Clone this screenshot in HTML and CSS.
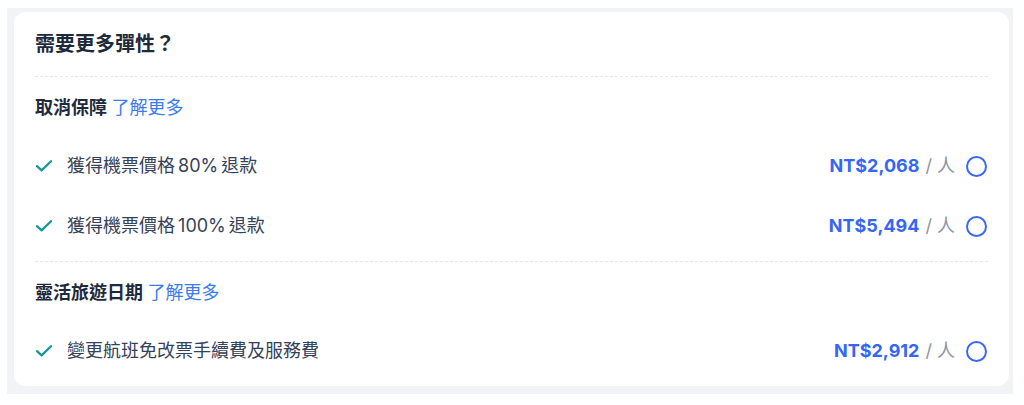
FILE: index.html
```html
<!DOCTYPE html>
<html lang="zh-Hant">
<head>
<meta charset="utf-8">
<link rel="stylesheet" href="styles.css">
</head>
<body>
<div class="frame">
  <div class="card">
    <div class="title">需要更多彈性？</div>
    <div class="section">
      <div class="sec-head">取消保障 <span class="link">了解更多</span></div>
      <div class="row">
        <div class="left">
          <svg class="check" width="16" height="12" viewBox="0 0 16 12"><path d="M1 6.2 L5.6 10.4 L15 1.2" fill="none" stroke="#17969b" stroke-width="2.3" stroke-linecap="round" stroke-linejoin="round"/></svg>
          <span class="label">獲得機票價格 80% 退款</span>
        </div>
        <div class="right">
          <span class="price">NT$2,068</span><span class="per">/ 人</span><span class="radio"></span>
        </div>
      </div>
      <div class="row">
        <div class="left">
          <svg class="check" width="16" height="12" viewBox="0 0 16 12"><path d="M1 6.2 L5.6 10.4 L15 1.2" fill="none" stroke="#17969b" stroke-width="2.3" stroke-linecap="round" stroke-linejoin="round"/></svg>
          <span class="label">獲得機票價格 100% 退款</span>
        </div>
        <div class="right">
          <span class="price">NT$5,494</span><span class="per">/ 人</span><span class="radio"></span>
        </div>
      </div>
    </div>
    <div class="section">
      <div class="sec-head">靈活旅遊日期 <span class="link">了解更多</span></div>
      <div class="row">
        <div class="left">
          <svg class="check" width="16" height="12" viewBox="0 0 16 12"><path d="M1 6.2 L5.6 10.4 L15 1.2" fill="none" stroke="#17969b" stroke-width="2.3" stroke-linecap="round" stroke-linejoin="round"/></svg>
          <span class="label">變更航班免改票手續費及服務費</span>
        </div>
        <div class="right">
          <span class="price">NT$2,912</span><span class="per">/ 人</span><span class="radio"></span>
        </div>
      </div>
    </div>
  </div>
</div>
</body>
</html>
```
FILE: styles.css
```css
html, body {
  margin: 0;
  padding: 0;
  background: #ffffff;
}
body {
  font-family: "Inter", "Noto Sans CJK TC", sans-serif;
}
.frame {
  margin: 8px 0 0 7px;
  width: 1006px;
  height: 386px;
  box-sizing: border-box;
  padding: 4px 4px 8px 7px;
  background: #f2f3f7;
}
.card {
  height: 100%;
  box-sizing: border-box;
  background: #ffffff;
  border-radius: 12px;
  padding: 0 21px;
}
.title {
  font-size: 20px;
  line-height: 28px;
  font-weight: 600;
  color: #1e2a3b;
  padding: 18px 0;
  border-bottom: 1px dashed #e3e6ea;
}
.section {
  padding: 19px 0 5px;
}
.section + .section {
  border-top: 1px dashed #e3e6ea;
}
.sec-head {
  font-size: 18px;
  line-height: 24px;
  font-weight: 600;
  color: #1e2a3b;
  margin-bottom: 16px;
}
.link {
  color: #3a7cf0;
  font-weight: 400;
}
.row {
  display: flex;
  justify-content: space-between;
  align-items: center;
  padding: 18px 0;
  height: 24px;
}
.left {
  display: flex;
  align-items: center;
}
.check {
  margin-left: 1px;
  margin-right: 15px;
}
.label {
  font-size: 18px;
  line-height: 24px;
  color: #34425a;
  word-spacing: -2px;
}
.right {
  display: flex;
  align-items: center;
}
.price {
  font-size: 18px;
  font-weight: 700;
  color: #3566f5;
  line-height: 24px;
}
.per {
  font-size: 18px;
  color: #8c95a5;
  margin-left: 6px;
  line-height: 24px;
}
.radio {
  width: 17px;
  height: 17px;
  border: 2px solid #3c68f5;
  border-radius: 50%;
  margin-left: 11px;
  margin-right: 1px;
}
```
